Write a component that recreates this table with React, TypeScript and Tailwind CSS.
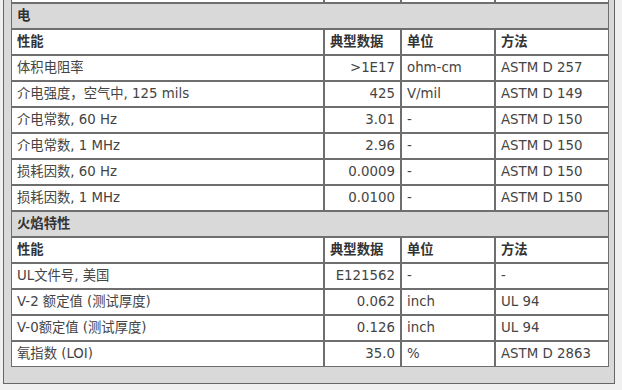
type Row = [string, string, string, string];

const electrical: Row[] = [
  ["体积电阻率", ">1E17", "ohm-cm", "ASTM D 257"],
  ["介电强度，空气中, 125 mils", "425", "V/mil", "ASTM D 149"],
  ["介电常数, 60 Hz", "3.01", "-", "ASTM D 150"],
  ["介电常数, 1 MHz", "2.96", "-", "ASTM D 150"],
  ["损耗因数, 60 Hz", "0.0009", "-", "ASTM D 150"],
  ["损耗因数, 1 MHz", "0.0100", "-", "ASTM D 150"],
];

const flame: Row[] = [
  ["UL文件号, 美国", "E121562", "-", "-"],
  ["V-2 额定值 (测试厚度)", "0.062", "inch", "UL 94"],
  ["V-0额定值 (测试厚度)", "0.126", "inch", "UL 94"],
  ["氧指数 (LOI)", "35.0", "%", "ASTM D 2863"],
];

const td = "border border-[#6e6e6e] px-[5px] py-0 h-[26px] leading-[24px] whitespace-nowrap";

function Section({ title, rows }: { title: string; rows: Row[] }) {
  return (
    <>
      <tr className="bg-[#d9d9d9]">
        <td colSpan={4} className={`${td} font-bold text-[#333]`}>
          {title}
        </td>
      </tr>
      <tr className="bg-white font-bold text-[#333]">
        <td className={td}>性能</td>
        <td className={td}>典型数据</td>
        <td className={td}>单位</td>
        <td className={td}>方法</td>
      </tr>
      {rows.map((r) => (
        <tr key={r[0]} className="bg-white">
          <td className={td}>{r[0]}</td>
          <td className={`${td} text-right`}>{r[1]}</td>
          <td className={td}>{r[2]}</td>
          <td className={td}>{r[3]}</td>
        </tr>
      ))}
    </>
  );
}

export default function App() {
  return (
    <div
      className="w-[622px] h-[390px] overflow-hidden bg-[#f0f0f0] text-[13.33px] text-[#444]"
      style={{ fontFamily: '"DejaVu Sans", "Noto Sans CJK SC", sans-serif' }}
    >
      <div className="-mt-[24px] ml-[3px] w-[612px] border border-[#666] bg-[#d9d9d9] pl-[7px] pr-[5px] pb-[16px]">
        <table className="w-[598px] table-fixed border-separate border-spacing-0">
          <colgroup>
            <col className="w-[313px]" />
            <col className="w-[77px]" />
            <col className="w-[94px]" />
            <col className="w-[114px]" />
          </colgroup>
          <tbody>
            <tr className="bg-white">
              <td className={td}>&nbsp;</td>
              <td className={td}>&nbsp;</td>
              <td className={td}>&nbsp;</td>
              <td className={td}>&nbsp;</td>
            </tr>
            <Section title="电" rows={electrical} />
            <Section title="火焰特性" rows={flame} />
          </tbody>
        </table>
      </div>
    </div>
  );
}
